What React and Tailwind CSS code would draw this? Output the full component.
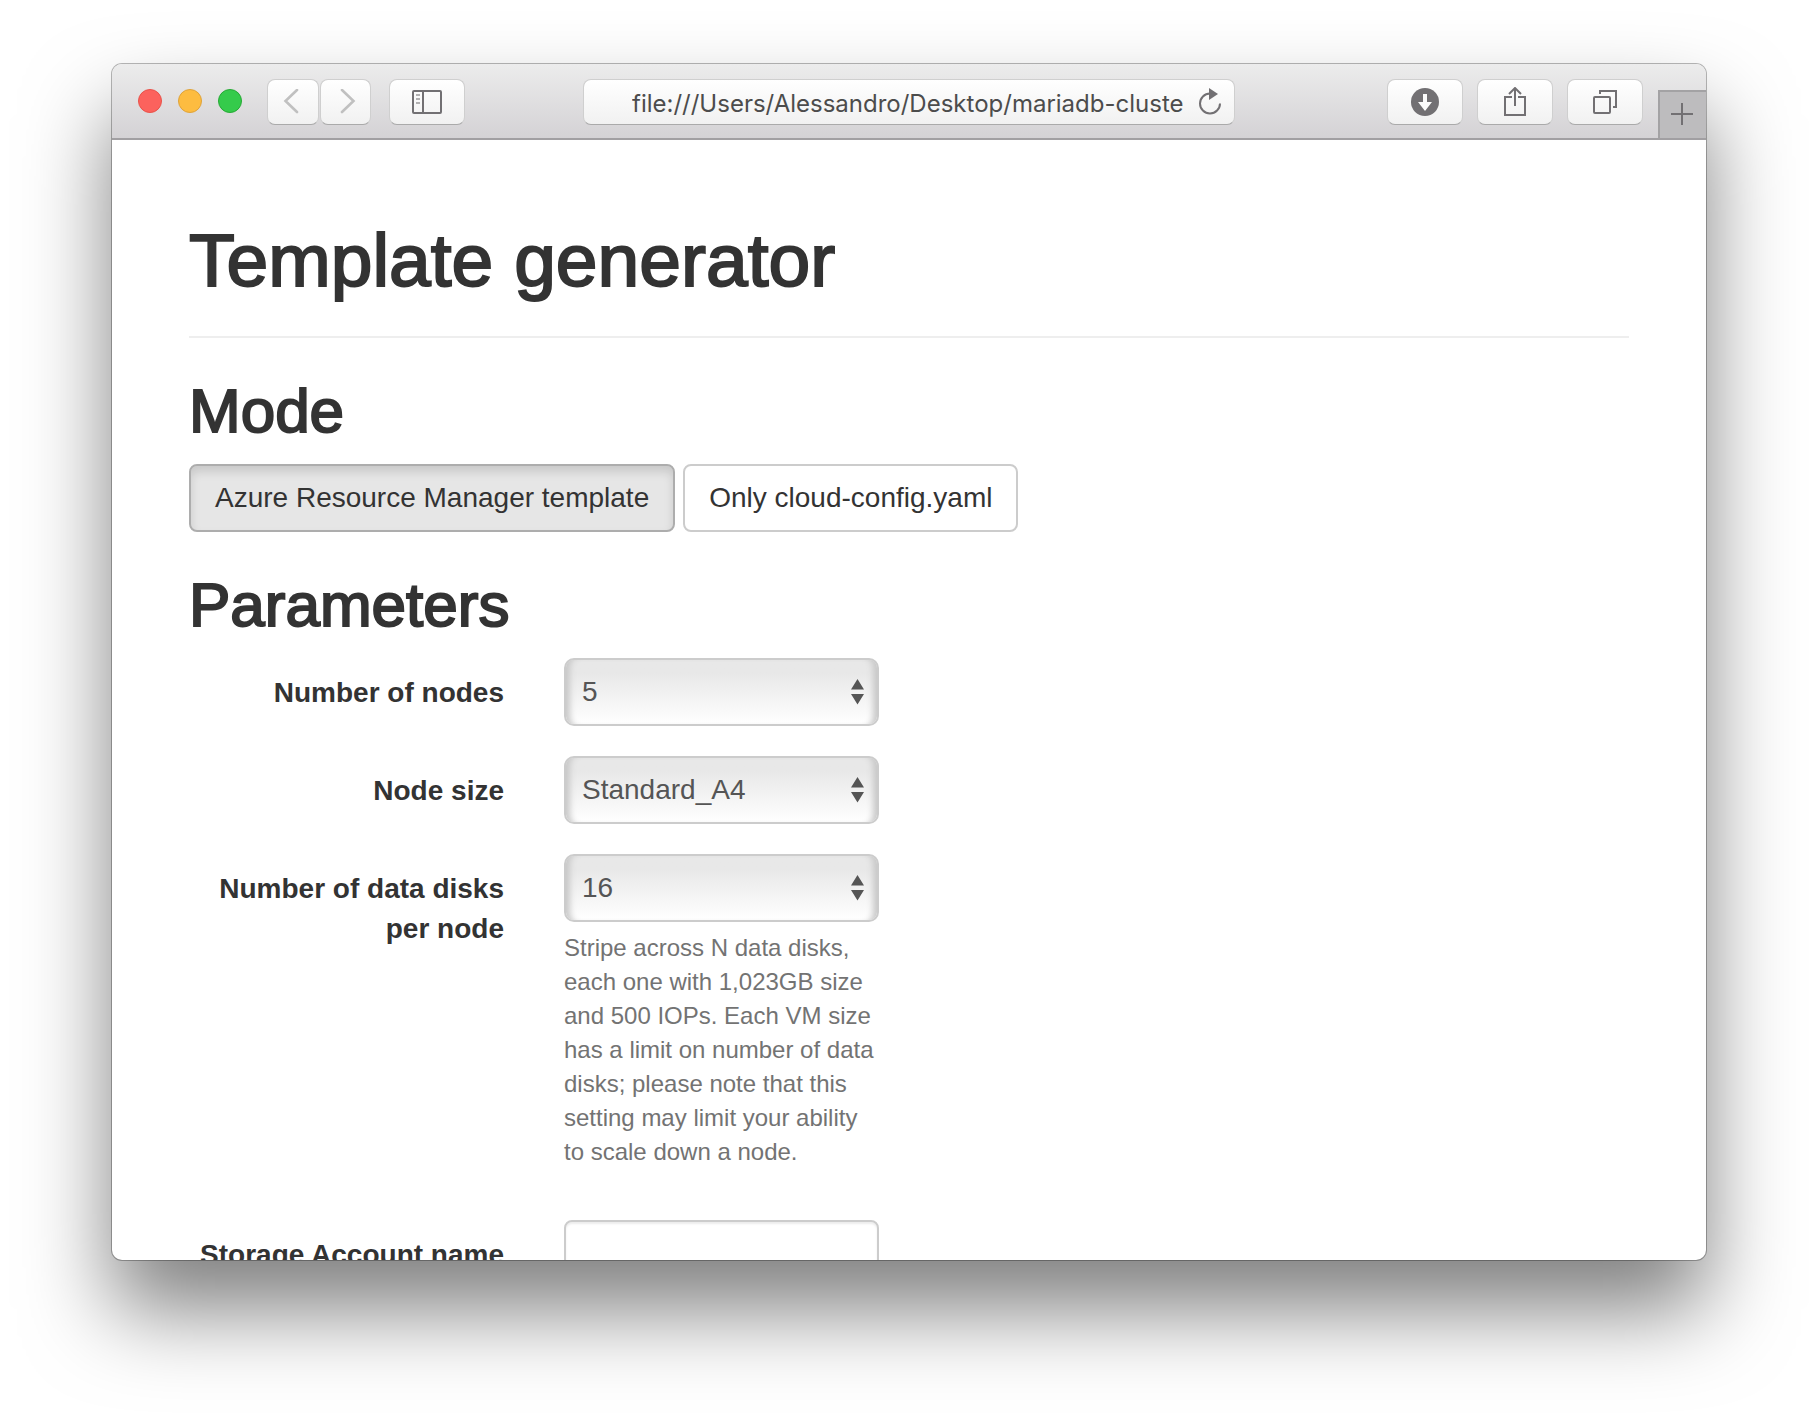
import { useState } from "react";

/* -------------------------------------------------------------------------- */
/*                                FORM DATA                                   */
/* -------------------------------------------------------------------------- */

const modes = ["Azure Resource Manager template", "Only cloud-config.yaml"];

const nodeCounts = ["3", "5", "7", "9"];
const nodeSizes = ["Standard_A2", "Standard_A3", "Standard_A4"];
const diskCounts = ["2", "4", "8", "16"];

/* -------------------------------------------------------------------------- */
/*                             TOOLBAR PIECES                                 */
/* -------------------------------------------------------------------------- */

// Rounded white button used all over the browser toolbar
function ToolbarButton({ label, className = "w-[76px]", children }) {
  return (
    <button
      type="button"
      aria-label={label}
      className={`h-[46px] shrink-0 rounded-lg border border-[#cfcfcf] border-b-[#aaaaaa] bg-linear-to-b from-white to-[#f1f1f1] flex items-center justify-center ${className}`}
    >
      {children}
    </button>
  );
}

function Toolbar() {
  return (
    <div className="flex h-[76px] shrink-0 items-center border-b-2 border-[#a19fa2] bg-linear-to-b from-[#ececec] to-[#d4d2d5] pt-0.5 text-[#727073]">
      {/* Left: window controls, history, sidebar */}
      <div className="flex flex-1 items-center">
        <div className="ml-[26px] flex gap-4 pb-0.5">
          <span className="size-6 rounded-full border border-[#e9524a] bg-[#fc625d]" />
          <span className="size-6 rounded-full border border-[#dfa33a] bg-[#fdbc40]" />
          <span className="size-6 rounded-full border border-[#27aa35] bg-[#35cb4b]" />
        </div>

        <div className="ml-[25px] flex gap-px">
          <ToolbarButton label="Back" className="w-[52px] pr-1">
            <svg width="16" height="26" viewBox="0 0 16 26" fill="none" stroke="#c0c0c0" strokeWidth="2.6">
              <path d="M14 1 L2.5 12 L14 23" strokeLinecap="round" />
            </svg>
          </ToolbarButton>
          <ToolbarButton label="Forward" className="w-[51px] pl-1">
            <svg width="16" height="26" viewBox="0 0 16 26" fill="none" stroke="#c0c0c0" strokeWidth="2.6">
              <path d="M2 1 L13.5 12 L2 23" strokeLinecap="round" />
            </svg>
          </ToolbarButton>
        </div>

        <div className="ml-[18px] flex">
          <ToolbarButton label="Show sidebar">
            <svg width="30" height="24" viewBox="0 0 30 24" fill="none" stroke="currentColor" strokeWidth="2">
              <rect x="1" y="1" width="28" height="22" rx="1" />
              <path d="M11 1 V23" />
              <path d="M4 5 H8 M4 9 H8 M4 13 H8" strokeWidth="1.6" stroke="#9a999b" />
            </svg>
          </ToolbarButton>
        </div>
      </div>

      {/* Address bar */}
      <div className="flex h-[46px] w-[652px] items-center rounded-lg border border-[#cfcfcf] border-b-[#aaaaaa] bg-linear-to-b from-white to-[#f1f1f1] pr-3 pl-12">
        <input
          aria-label="Address"
          defaultValue="file:///Users/Alessandro/Desktop/mariadb-cluste"
          className="min-w-0 flex-1 bg-transparent pt-1 font-['Inter',sans-serif] text-[24px] text-[#4c4c4c] outline-none"
        />
        <button type="button" aria-label="Reload" className="shrink-0">
          <svg width="24" height="28" viewBox="0 0 24 28" fill="none">
            <path d="M12 5.5 A10 10 0 1 0 22 15.5" stroke="currentColor" strokeWidth="2" />
            <path d="M11 0 L20 6 L11 12 Z" fill="currentColor" />
          </svg>
        </button>
      </div>

      {/* Right: downloads, share, tabs */}
      <div className="flex flex-1 items-center justify-end gap-[14px] self-stretch">
        <ToolbarButton label="Downloads">
          <svg width="28" height="28" viewBox="0 0 28 28">
            <circle cx="14" cy="14" r="14" fill="currentColor" />
            <path d="M12 6 H16 V14 H21 L14 23 L7 14 H12 Z" fill="#fbfbfb" />
          </svg>
        </ToolbarButton>
        <ToolbarButton label="Share">
          <svg width="22" height="30" viewBox="0 0 22 30" fill="none" stroke="currentColor" strokeWidth="2">
            <path d="M8 10 H1 V28 H21 V10 H14" />
            <path d="M11 19 V2 M5 7 L11 1 L17 7" />
          </svg>
        </ToolbarButton>
        <ToolbarButton label="Show all tabs">
          <svg width="24" height="24" viewBox="0 0 24 24" fill="none" stroke="currentColor" strokeWidth="2">
            <rect x="1" y="7" width="16" height="16" rx="1" />
            <path d="M7 4 V1 H23 V17 H20" />
          </svg>
        </ToolbarButton>
        <button
          type="button"
          aria-label="New tab"
          className="ml-px flex h-12 w-12 items-center justify-center self-end border-t-2 border-l-2 border-[#a3a2a4] bg-[#bdbcbe] pr-0.5 pb-0.5"
        >
          <svg width="22" height="22" viewBox="0 0 22 22" stroke="currentColor" strokeWidth="2">
            <path d="M11 0 V22 M0 11 H22" />
          </svg>
        </button>
      </div>
    </div>
  );
}

/* -------------------------------------------------------------------------- */
/*                               FORM PIECES                                  */
/* -------------------------------------------------------------------------- */

// One row: right-aligned label in the first column, control in the second
function FormRow({ id, label, children }) {
  return (
    <div className="grid grid-cols-4 gap-x-15">
      <label htmlFor={id} className="pt-[15px] text-right text-[28px] leading-10 font-bold">
        {label}
      </label>
      <div>{children}</div>
    </div>
  );
}

function SelectBox({ id, options, value, onChange }) {
  return (
    <div className="relative">
      <select
        id={id}
        value={value}
        onChange={(e) => onChange(e.target.value)}
        className="h-[68px] w-full appearance-none rounded-[10px] border-2 border-[#cccccc] bg-linear-to-b from-[#e8e8e8] from-20% to-white pr-10 pl-4 text-[28px] text-[#555555] shadow-[inset_9px_0_6px_-5px_#c8c8c8,inset_-9px_0_6px_-5px_#c8c8c8]"
      >
        {options.map((option) => (
          <option key={option}>{option}</option>
        ))}
      </select>
      {/* Up / down arrows over the right end of the select */}
      <svg
        width="13"
        height="26"
        viewBox="0 0 13 26"
        fill="#555555"
        className="pointer-events-none absolute top-[21px] right-[15px]"
      >
        <path d="M0 10.5 L6.5 0 L13 10.5 Z M0 15 L6.5 25.5 L13 15 Z" />
      </svg>
    </div>
  );
}

/* -------------------------------------------------------------------------- */
/*                            MAIN COMPONENT                                  */
/* -------------------------------------------------------------------------- */

export default function App() {
  const [mode, setMode] = useState(modes[0]);
  const [nodes, setNodes] = useState("5");
  const [size, setSize] = useState("Standard_A4");
  const [disks, setDisks] = useState("16");

  return (
    <div className="flex h-screen flex-col overflow-hidden bg-white px-28 pt-16 pb-40 font-['Liberation_Sans',Arial,sans-serif] text-[#333333]">
      <div className="flex min-h-0 flex-1 flex-col overflow-hidden rounded-[10px] bg-white shadow-[0_0_0_1px_rgba(0,0,0,0.28),0_50px_86px_rgba(0,0,0,0.5)]">
        <Toolbar />

        <main className="min-h-0 flex-1 overflow-hidden px-[77px] pt-20">
          <h1 className="border-b-2 border-[#eeeeee] pb-9 text-[75px] leading-20 [-webkit-text-stroke:2px_#333333]">
            Template generator
          </h1>

          <h2 className="mt-10 text-[62px] leading-[66px] [-webkit-text-stroke:2px_#333333]">
            Mode
          </h2>
          <div className="mt-5 flex gap-2">
            {modes.map((name) => (
              <button
                key={name}
                type="button"
                onClick={() => setMode(name)}
                className={`h-[68px] rounded-lg border-2 px-6 text-[28px] leading-10 ${
                  mode === name
                    ? "border-[#adadad] bg-[#e6e6e6] shadow-[inset_0_6px_10px_rgba(0,0,0,0.125)]"
                    : "border-[#cccccc] bg-white"
                }`}
              >
                {name}
              </button>
            ))}
          </div>

          <h2 className="mt-10 text-[62px] leading-[66px] [-webkit-text-stroke:2px_#333333]">
            Parameters
          </h2>
          <form className="mt-5 flex flex-col gap-[30px]">
            <FormRow id="nodes" label="Number of nodes">
              <SelectBox id="nodes" options={nodeCounts} value={nodes} onChange={setNodes} />
            </FormRow>
            <FormRow id="size" label="Node size">
              <SelectBox id="size" options={nodeSizes} value={size} onChange={setSize} />
            </FormRow>
            <FormRow id="disks" label="Number of data disks per node">
              <SelectBox id="disks" options={diskCounts} value={disks} onChange={setDisks} />
              <p className="mt-[9px] mb-[21px] text-[24px] leading-[34px] text-[#737373]">
                Stripe across N data disks, each one with 1,023GB size and 500 IOPs. Each VM size
                has a limit on number of data disks; please note that this setting may limit your
                ability to scale down a node.
              </p>
            </FormRow>
            <FormRow id="storage" label="Storage Account name">
              <input
                id="storage"
                type="text"
                className="h-[68px] w-full rounded-lg border-2 border-[#cccccc] px-4 text-[28px] shadow-[inset_0_2px_2px_rgba(0,0,0,0.075)]"
              />
            </FormRow>
          </form>
        </main>
      </div>
    </div>
  );
}
